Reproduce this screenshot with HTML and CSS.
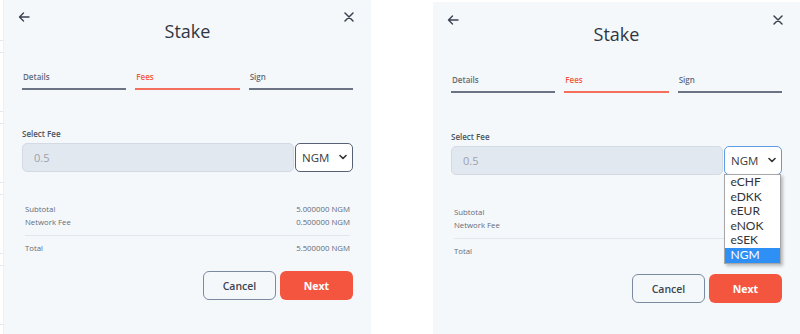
FILE: index.html
```html
<!DOCTYPE html>
<html lang="en">
  <head>
    <meta charset="UTF-8" />
    <meta name="viewport" content="width=device-width, initial-scale=1.0" />
    <title>Stake | Fees</title>
    <link rel="stylesheet" href="styles.css">
  </head>
  <body>
    <div class="edge"></div>

    <!-- closed select -->
    <section class="panel">
      <header class="top">
        <button class="icon-btn back" aria-label="Back">
          <svg width="12" height="10" viewBox="0 0 12 10"><path d="M11 5H1.5M5.5 1L1.5 5l4 4" fill="none" stroke="#3a4250" stroke-width="1.4" stroke-linecap="round" stroke-linejoin="round"/></svg>
        </button>
        <h1 class="title">Stake</h1>
        <button class="icon-btn close" aria-label="Close">
          <svg width="10" height="10" viewBox="0 0 10 10"><path d="M1 1l8 8M9 1L1 9" fill="none" stroke="#3a4250" stroke-width="1.5" stroke-linecap="round"/></svg>
        </button>
      </header>

      <nav class="steps">
        <span class="step">Details</span>
        <span class="step active">Fees</span>
        <span class="step">Sign</span>
      </nav>

      <label class="field-label">Select Fee</label>
      <div class="fee-row">
        <div class="fee-input">0.5</div>
        <div class="select">
          <span>NGM</span>
          <svg width="8" height="6" viewBox="0 0 8 6"><path d="M1 1.5l3 3 3-3" fill="none" stroke="#333" stroke-width="1.6" stroke-linecap="round" stroke-linejoin="round"/></svg>
        </div>
      </div>

      <div class="summary">
        <div class="line"><span>Subtotal</span><span>5.000000 NGM</span></div>
        <div class="line"><span>Network Fee</span><span>0.500000 NGM</span></div>
        <div class="line total"><span>Total</span><span>5.500000 NGM</span></div>
      </div>

      <div class="actions">
        <button class="btn btn-cancel">Cancel</button>
        <button class="btn btn-next">Next</button>
      </div>
    </section>

    <div class="spacer"></div>

    <!-- open select, the list hides the amounts -->
    <section class="panel panel-open">
      <header class="top">
        <button class="icon-btn back" aria-label="Back">
          <svg width="12" height="10" viewBox="0 0 12 10"><path d="M11 5H1.5M5.5 1L1.5 5l4 4" fill="none" stroke="#3a4250" stroke-width="1.4" stroke-linecap="round" stroke-linejoin="round"/></svg>
        </button>
        <h1 class="title">Stake</h1>
        <button class="icon-btn close" aria-label="Close">
          <svg width="10" height="10" viewBox="0 0 10 10"><path d="M1 1l8 8M9 1L1 9" fill="none" stroke="#3a4250" stroke-width="1.5" stroke-linecap="round"/></svg>
        </button>
      </header>

      <nav class="steps">
        <span class="step">Details</span>
        <span class="step active">Fees</span>
        <span class="step">Sign</span>
      </nav>

      <label class="field-label">Select Fee</label>
      <div class="fee-row">
        <div class="fee-input">0.5</div>
        <div class="select focused">
          <span>NGM</span>
          <svg width="8" height="6" viewBox="0 0 8 6"><path d="M1 1.5l3 3 3-3" fill="none" stroke="#333" stroke-width="1.6" stroke-linecap="round" stroke-linejoin="round"/></svg>
          <ul class="options">
            <li>eCHF</li>
            <li>eDKK</li>
            <li>eEUR</li>
            <li>eNOK</li>
            <li>eSEK</li>
            <li class="selected">NGM</li>
          </ul>
        </div>
      </div>

      <div class="summary">
        <div class="line"><span>Subtotal</span></div>
        <div class="line"><span>Network Fee</span></div>
        <div class="line total"><span>Total</span></div>
      </div>

      <div class="actions">
        <button class="btn btn-cancel">Cancel</button>
        <button class="btn btn-next">Next</button>
      </div>
    </section>
  </body>
</html>
```

FILE: styles.css
```css
/* resets */
* {
  padding: 0;
  margin: 0;
  box-sizing: border-box;
}
body {
  font-family: "Open Sans", "Noto Sans", sans-serif;
  background: #fff;
  display: flex;
  width: 800px;
  height: 334px;
  overflow: hidden;
  color: #2f3642;
}

/* strip of the page behind, at the far left */
.edge {
  width: 4px;
  height: 334px;
  border-right: 1px solid #eef1f5;
  background: repeating-linear-gradient(
    to bottom,
    transparent 0,
    transparent 40px,
    #e4e7eb 40px,
    #e4e7eb 41px,
    transparent 41px,
    transparent 52px,
    #e4e7eb 52px,
    #e4e7eb 53px,
    transparent 53px,
    transparent 71px
  );
}
.spacer {
  width: 62px;
}

/* panel */
.panel {
  width: 367px;
  height: 334px;
  background: #f5f8fb;
  padding: 11px 18px 0 18px;
  display: flex;
  flex-direction: column;
}
.panel-open {
  margin-top: 2px;
  padding-top: 12px;
}

.top {
  display: grid;
  grid-template-columns: 1fr auto 1fr;
  margin: 0 -4px;
  height: 56px;
}
.icon-btn {
  border: none;
  background: none;
  width: 12px;
  height: 12px;
  display: flex;
  align-items: center;
  justify-content: center;
  cursor: pointer;
}
.close {
  justify-self: end;
  margin-right: 2px;
}
.title {
  margin-top: 8px;
  font-size: 18px;
  line-height: 24px;
  font-weight: 400;
  color: #2f3642;
}

/* steps */
.steps {
  display: grid;
  grid-template-columns: repeat(3, 1fr);
  gap: 9px;
}
.step {
  font-size: 8px;
  line-height: 12px;
  font-weight: 600;
  color: #636b78;
  padding: 4px 0 5px 1px;
  border-bottom: 2px solid #6b7384;
}
.step.active {
  color: #f4583f;
  border-bottom-color: #f4705c;
}

/* fee select */
.field-label {
  display: block;
  margin-top: 38px;
  font-size: 8px;
  line-height: 12px;
  font-weight: 600;
  color: #4b5260;
}
.fee-row {
  display: flex;
  gap: 1px;
  margin-top: 3px;
  height: 29px;
}
.fee-input {
  flex: 1;
  background: #e2e8f0;
  border: 1px solid #d3dae3;
  border-radius: 5px;
  font-size: 11px;
  color: #9aa2ad;
  padding-left: 11px;
  display: flex;
  align-items: center;
}
.select {
  position: relative;
  width: 58px;
  background: #fff;
  border: 1.5px solid #566174;
  border-radius: 5px;
  display: flex;
  align-items: center;
  justify-content: space-between;
  padding: 0 5px 1px 6px;
  font-size: 11.5px;
  color: #3b3b3b;
}
.select.focused {
  border-color: #5d9de4;
}

/* open option list */
.options {
  position: absolute;
  top: 27px;
  left: -1.5px;
  width: 57px;
  list-style: none;
  background: #fff;
  border: 1px solid #a7a7a7;
  box-shadow: 2px 2px 3px rgba(0, 0, 0, 0.25);
  z-index: 10;
}
.options li {
  font-family: Lato, "Open Sans", sans-serif;
  font-size: 12px;
  line-height: 14.6px;
  padding-left: 6px;
  color: #333;
}
.options li.selected {
  background: #2e90f5;
  color: #fff;
}

/* summary */
.summary {
  margin: 31px 3px 0 3px;
}
.line {
  display: flex;
  justify-content: space-between;
  font-size: 7.8px;
  line-height: 13px;
  color: #646b77;
}
.line.total {
  border-top: 1px solid #e3e7ed;
  margin-top: 6px;
  padding-top: 6px;
}

/* buttons */
.actions {
  display: flex;
  justify-content: flex-end;
  gap: 4px;
  margin-top: 16px;
}
.btn {
  width: 73px;
  height: 29px;
  border-radius: 6px;
  font-family: inherit;
  font-size: 10.5px;
  font-weight: 600;
  cursor: pointer;
}
.btn-cancel {
  background: #f5f8fb;
  border: 1.5px solid #7c8aa0;
  color: #3d4450;
}
.btn-next {
  background: #f4553f;
  border: none;
  color: #fff;
  font-weight: 700;
}
```
